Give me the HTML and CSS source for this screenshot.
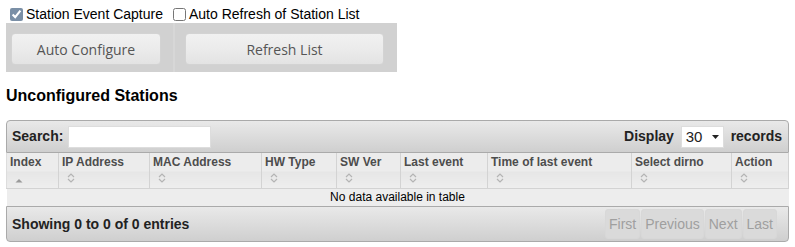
FILE: index.html
```html
<!DOCTYPE html>
<html lang="en">
<head>
    <meta charset="UTF-8">
    <title>Stations</title>
    <link rel="stylesheet" href="styles.css">
</head>
<body>

    <!-- Capture options -->
    <div class="options">
        <label><input type="checkbox" checked> Station Event Capture</label>
        <label><input type="checkbox"> Auto Refresh of Station List</label>
    </div>

    <!-- Action buttons -->
    <div class="actions">
        <div class="action-cell first">
            <button class="ui-button btn-auto">Auto Configure</button>
        </div>
        <div class="action-cell">
            <button class="ui-button btn-refresh">Refresh List</button>
        </div>
    </div>

    <h3 class="section-title">Unconfigured Stations</h3>

    <!-- Stations table -->
    <div class="dt-wrapper">
        <div class="dt-toolbar dt-top">
            <label class="dt-search">Search: <input type="text"></label>
            <label class="dt-length">Display
                <span class="fake-select">30 <svg width="7" height="4" viewBox="0 0 7 4"><path d="M0 0h7L3.5 4z" fill="#222"/></svg></span>
                records</label>
        </div>

        <table class="dt-table">
            <thead>
                <tr>
                    <th class="c-index">Index<span class="sort asc"><svg width="8" height="5" viewBox="0 0 8 5"><path d="M0.5 4.5L4 1l3.5 3.5z" fill="#9a9a9a"/></svg></span></th>
                    <th class="c-ip">IP Address<span class="sort"></span></th>
                    <th class="c-mac">MAC Address<span class="sort"></span></th>
                    <th class="c-hw">HW Type<span class="sort"></span></th>
                    <th class="c-sw">SW Ver<span class="sort"></span></th>
                    <th class="c-last">Last event<span class="sort"></span></th>
                    <th class="c-time">Time of last event<span class="sort"></span></th>
                    <th class="c-dirno">Select dirno<span class="sort"></span></th>
                    <th class="c-action">Action<span class="sort"></span></th>
                </tr>
            </thead>
            <tbody>
                <tr><td colspan="9" class="empty">No data available in table</td></tr>
            </tbody>
        </table>

        <div class="dt-toolbar dt-bottom">
            <span class="dt-info">Showing 0 to 0 of 0 entries</span>
            <div class="dt-paging">
                <span class="page-btn">First</span>
                <span class="page-btn">Previous</span>
                <span class="page-btn">Next</span>
                <span class="page-btn">Last</span>
            </div>
        </div>
    </div>

    <script>
        // Fill the empty sort slots with the both-ways carat
        const carat = '<svg width="8" height="10" viewBox="0 0 8 10"><path d="M1 4L4 1l3 3M1 6l3 3 3-3" fill="none" stroke="#b4b4b4" stroke-width="1.2"/></svg>';
        document.querySelectorAll('.sort:not(.asc)').forEach(s => {
            s.innerHTML = carat;
        });
    </script>

</body>
</html>
```

FILE: styles.css
```css
/* General */
body {
    font-family: Arial, "Liberation Sans", sans-serif;
    margin: 0;
    padding: 6px 6px 0 6px;
    color: #000;
}

/* Checkbox row */
.options {
    font-size: 14px;
    height: 17px;
    line-height: 17px;
    display: flex;
    gap: 6px;
}

.options label {
    display: flex;
    align-items: center;
}

.options input {
    width: 13px;
    height: 13px;
    margin: 0 3px 0 4px;
    accent-color: #7a8fa6;
}

/* Button box */
.actions {
    display: flex;
    width: 391px;
    height: 49px;
    background-color: #d1d1d1;
}

.action-cell {
    padding: 10px 0 0 5px;
}

.action-cell.first {
    width: 162px;
    border-right: 2px solid #d7d7d7;
}

.action-cell:not(.first) {
    padding-left: 10px;
}

.ui-button {
    font-family: "Open Sans", Verdana, sans-serif;
    font-size: 14px;
    color: #555;
    height: 32px;
    border: 1px solid #d3d3d3;
    border-radius: 4px;
    background: linear-gradient(#f1f1f1 0%, #ebebeb 50%, #e3e3e3 100%);
    padding: 0;
}

.btn-auto {
    width: 150px;
}

.btn-refresh {
    width: 199px;
}

/* Section title */
.section-title {
    font-size: 16px;
    font-weight: bold;
    margin: 14px 0 15px 0;
    line-height: 19px;
}

/* Table wrapper */
.dt-wrapper {
    width: 783px;
}

.dt-toolbar {
    border: 1px solid #aaa;
    color: #222;
    font-weight: bold;
    font-size: 14px;
    display: flex;
    align-items: center;
    justify-content: space-between;
    background: linear-gradient(#e9e9e9 0%, #dcdcdc 50%, #cfcfcf 100%);
}

.dt-top {
    height: 31px;
    border-radius: 4px 4px 0 0;
    padding: 0 6px 0 5px;
}

.dt-bottom {
    height: 34px;
    border-radius: 0 0 4px 4px;
    padding: 0 11px 0 5px;
}

.dt-search input {
    width: 137px;
    height: 18px;
    border: 1px solid #ddd;
    margin-left: 1px;
    vertical-align: middle;
}

.fake-select {
    display: inline-flex;
    align-items: center;
    justify-content: space-between;
    width: 33px;
    height: 20px;
    padding: 0 4px;
    margin: 0 3px;
    background: #fff;
    border: 1px solid #ddd;
    font-weight: normal;
    font-size: 15px;
    vertical-align: middle;
}

/* Table */
.dt-table {
    width: 100%;
    border-collapse: collapse;
    font-size: 12px;
}

.dt-table th {
    text-align: left;
    vertical-align: top;
    font-weight: bold;
    color: #4d4d4d;
    height: 33px;
    padding: 2px 3px 0 3px;
    border: 1px solid #d3d3d3;
    border-top: none;
    background: linear-gradient(#ececec 0%, #ececec 50%, #e6e6e6 55%, #eeeeee 100%);
    line-height: 14px;
}

.dt-table th:first-child {
    border-left-color: #ddd;
}

.sort {
    display: block;
    margin-top: 3px;
    padding-left: 5px;
    height: 12px;
}

.sort.asc svg {
    margin-top: 4px;
}

.c-index { width: 45px; }
.c-ip { width: 84px; }
.c-mac { width: 105px; }
.c-hw { width: 68px; }
.c-sw { width: 57px; }
.c-last { width: 80px; }
.c-time { width: 137px; }
.c-dirno { width: 93px; }

.empty {
    text-align: center;
    background-color: #ededed;
    height: 17px;
    padding: 0;
    line-height: 17px;
}

/* Pagination */
.dt-paging {
    display: flex;
    gap: 1px;
    font-weight: normal;
    font-size: 14px;
}

.page-btn {
    color: #9f9f9f;
    padding: 6px 3px;
    border: 1px solid #d8d8d8;
    border-radius: 3px;
    background: #dadada;
}
```
